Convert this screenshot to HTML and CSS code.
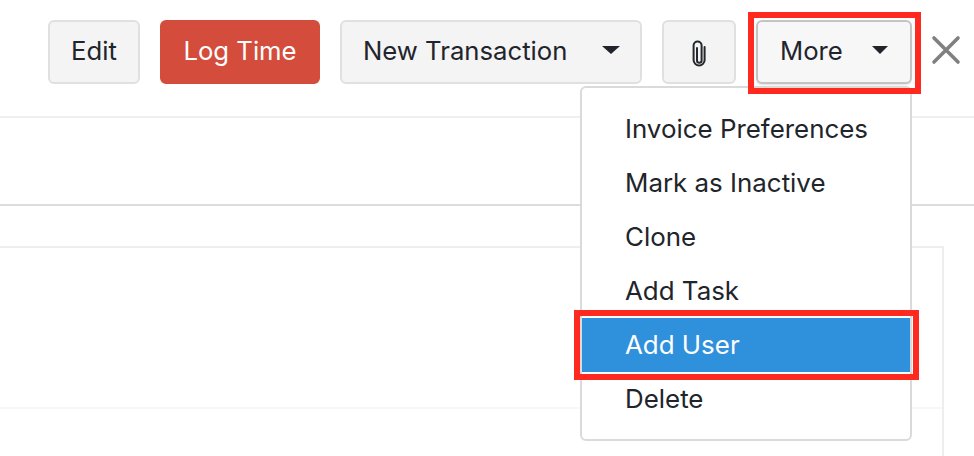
FILE: index.html
```html
<!DOCTYPE html>
<html lang="en">
<head>
<meta charset="utf-8">
<title>Project actions</title>
<link rel="stylesheet" href="styles.css">
</head>
<body>
<div class="page">
  <header class="toolbar">
    <button class="btn btn-edit">Edit</button>
    <button class="btn btn-primary">Log Time</button>
    <button class="btn btn-transaction"><span>New Transaction</span><i class="caret caret-wide"></i></button>
    <button class="btn btn-attach" aria-label="Attach">
      <svg class="clip" width="16" height="28" viewBox="0 0 16 28" fill="none" stroke="#24272b" stroke-width="2" stroke-linecap="round"><path d="M6 8v12.500a2.300 2.300 0 0 0 4.600 0V5.500a4 4 0 0 0-8 0V20a5.500 5.500 0 0 0 11 0V7"/></svg>
    </button>
    <div class="more-wrap">
      <button class="btn btn-more"><span>More</span><i class="caret"></i></button>
      <span class="mark mark-more"></span>
    </div>
    <button class="close" aria-label="Close">
      <svg width="30" height="30" viewBox="0 0 30 30" fill="none" stroke="#808080" stroke-width="3.600" stroke-linecap="round"><path d="M3 3l24 24M27 3L3 27"/></svg>
    </button>
  </header>
  <div class="subbar"></div>
  <div class="content">
    <div class="panel"><div class="panel-head"></div></div>
  </div>
  <ul class="menu">
    <li>Invoice Preferences</li>
    <li>Mark as Inactive</li>
    <li>Clone</li>
    <li>Add Task</li>
    <li class="active">Add User<span class="mark mark-user"></span></li>
    <li>Delete</li>
  </ul>
</div>
</body>
</html>
```
FILE: styles.css
```css
* { box-sizing: border-box; }
html, body { margin: 0; height: 100%; background: #fff; overflow: hidden; }
.page {
  position: relative;
  width: 974px;
  height: 456px;
  font-family: "Inter", "Liberation Sans", sans-serif;
  color: #21252b;
}
.toolbar {
  display: flex;
  align-items: flex-start;
  height: 118px;
  padding: 20px 0 0 48px;
  gap: 20px;
  border-bottom: 2px solid #efefef;
}
.btn {
  display: flex;
  align-items: center;
  justify-content: center;
  height: 64px;
  padding: 0 0 4px;
  font: inherit;
  font-size: 25.700px;
  color: inherit;
  background: #f4f4f4;
  border: 2px solid #e0e0e0;
  border-radius: 6px;
}
.btn-edit { width: 92px; }
.btn-primary { width: 160px; background: #d44c3b; border-color: #d44c3b; color: #fff; }
.btn-transaction { width: 302px; justify-content: space-between; padding: 0 20px 4px 21px; }
.btn-attach { width: 74px; }
.clip { margin-top: 8px; }
.more-wrap { position: relative; z-index: 2; }
.btn-more {
  width: 156px;
  justify-content: space-between;
  padding: 0 22px 4px;
  background: #f7f7f7;
  border-color: #c4c4c4;
  box-shadow: 0 1px 2px rgba(0,0,0,.12);
}
.caret {
  width: 0;
  height: 0;
  border-left: 8px solid transparent;
  border-right: 8px solid transparent;
  border-top: 8px solid #21252b;
}
.caret-wide {
  border-left-width: 9px;
  border-right-width: 9px;
}
.close {
  display: flex;
  margin: 15px 0 0 -1px;
  padding: 0;
  background: none;
  border: 0;
}
.subbar { height: 88px; border-bottom: 2px solid #d9dde0; }
.content { padding-top: 40px; }
.panel {
  width: 944px;
  height: 210px;
  border-top: 2px solid #eeeeee;
  border-right: 2px solid #eeeeee;
}
.panel-head { height: 161px; border-bottom: 2px solid #f7f7f7; }
.menu {
  position: absolute;
  left: 580px;
  top: 86px;
  width: 332px;
  height: 355px;
  margin: 0;
  padding: 14px 0 0;
  list-style: none;
  background: #fff;
  border: 2px solid #dadada;
  border-radius: 6px;
}
.menu li {
  position: relative;
  height: 54px;
  line-height: 54px;
  padding-left: 43px;
  font-size: 25.900px;
}
.menu li.active { background: #2f90dc; color: #fff; }
.mark {
  position: absolute;
  border: 6px solid #ff2a1f;
  pointer-events: none;
}
.mark-more { left: -8px; right: -9px; top: -8px; bottom: -10px; }
.mark-user { left: -8px; right: -9px; top: -8px; bottom: -8px; }
```
